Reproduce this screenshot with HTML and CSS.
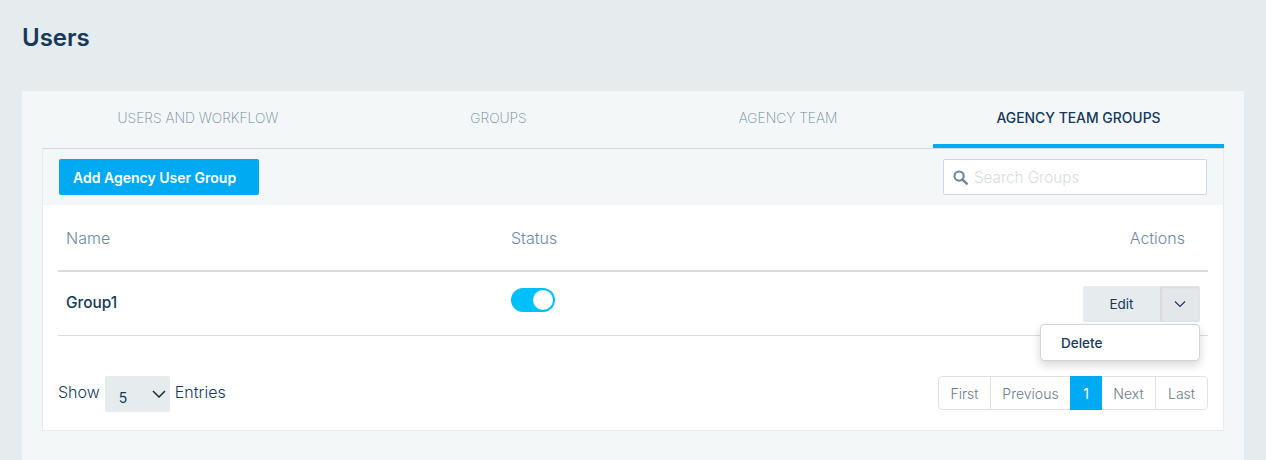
FILE: index.html
```html
<!DOCTYPE html>
<html lang="en">
<head>
<meta charset="utf-8">
<title>Users</title>
<link rel="stylesheet" href="styles.css">
</head>
<body>
<h1 class="page-title">Users</h1>
<main class="card">
  <nav class="tabs">
    <a class="tab">USERS AND WORKFLOW</a>
    <a class="tab">GROUPS</a>
    <a class="tab">AGENCY TEAM</a>
    <a class="tab tab-active">AGENCY TEAM GROUPS</a>
  </nav>
  <section class="panel">
    <div class="toolbar">
      <button class="btn-primary">Add Agency User Group</button>
      <label class="search">
        <svg class="search-icon" viewBox="0 0 16 16" width="15" height="15"><circle cx="6.5" cy="6.5" r="4.9" fill="none" stroke="#6f8599" stroke-width="2.2"/><path d="M10.2 10.2 14.6 14.6" stroke="#6f8599" stroke-width="2.6" stroke-linecap="round"/></svg>
        <span class="search-placeholder">Search Groups</span>
      </label>
    </div>
    <div class="content">
      <div class="row row-head">
        <div class="col-name">Name</div>
        <div class="col-status">Status</div>
        <div class="col-actions">Actions</div>
      </div>
      <div class="row row-body">
        <div class="col-name group-name">Group1</div>
        <div class="col-status"><span class="toggle"><span class="knob"></span></span></div>
        <div class="col-actions">
          <div class="action-group">
            <button class="btn-edit">Edit</button>
            <button class="btn-caret">
              <svg viewBox="0 0 12 8" width="12" height="8"><path d="M1 1.5 6 6.5 11 1.5" fill="none" stroke="#1d3a5a" stroke-width="1.2"/></svg>
            </button>
            <div class="menu"><span class="menu-item">Delete</span></div>
          </div>
        </div>
      </div>
      <div class="footer">
        <div class="entries">
          <span>Show</span>
          <span class="select"><span class="select-value">5</span>
            <svg viewBox="0 0 14 8" width="14" height="8"><path d="M1 1 7 7 13 1" fill="none" stroke="#1b2a38" stroke-width="1.5"/></svg>
          </span>
          <span>Entries</span>
        </div>
        <div class="pager">
          <span class="page page-first">First</span>
          <span class="page page-prev">Previous</span>
          <span class="page page-num">1</span>
          <span class="page page-next">Next</span>
          <span class="page page-last">Last</span>
        </div>
      </div>
    </div>
  </section>
</main>
</body>
</html>
```
FILE: styles.css
```css
* { box-sizing: border-box; }
html, body { height: 100%; }
body {
  margin: 0;
  height: 460px;
  overflow: hidden;
  background: #e6ebee;
  font-family: Inter, "Liberation Sans", sans-serif;
  color: #15395b;
  padding: 0 22px;
}
.page-title {
  margin: 0;
  padding-top: 23px;
  height: 91px;
  font-size: 24px;
  line-height: 29px;
  font-weight: 600;
  color: #15395b;
}
.card {
  background: #f4f7f8;
  padding: 0 20px;
  height: 369px;
}
.tabs {
  display: grid;
  grid-template-columns: 312px 289px 290px 291px;
  height: 57px;
}
.tab {
  display: flex;
  align-items: center;
  justify-content: center;
  padding-bottom: 4px;
  font-size: 13.8px;
  font-weight: 200;
  color: #6e8799;
}
.tab-active {
  font-weight: 500;
  font-size: 13.9px;
  color: #15395b;
  border-bottom: 4px solid #00aaf2;
  padding-bottom: 0;
}
.panel {
  border: 1px solid #e6ebee;
  border-top: 1px solid #d2d9e1;
  height: 283px;
  background: #fff;
}
.toolbar {
  height: 56px;
  background: #f4f7f8;
  display: flex;
  align-items: center;
  justify-content: space-between;
  padding: 0 16px;
}
.btn-primary {
  width: 200px;
  height: 36px;
  border: 0;
  border-radius: 2px;
  background: #00aaf2;
  color: #fff;
  font: 600 14px Inter, sans-serif;
  text-align: left;
  padding: 0 14px;
}
.search {
  width: 264px;
  height: 36px;
  background: #fff;
  border: 1px solid #ced6de;
  border-radius: 2px;
  display: flex;
  align-items: center;
  padding-left: 9px;
  gap: 6px;
}
.search-placeholder {
  font-size: 15.2px;
  font-weight: 300;
  color: #d5dde5;
}
.content { padding: 0 15px; }
.row {
  display: flex;
  align-items: center;
  padding: 0 8px;
}
.row-head {
  height: 67px;
  border-bottom: 2px solid #dcdcdc;
  font-size: 16px;
  font-weight: 300;
  color: #6e8aa3;
}
.row-body {
  height: 64px;
  border-bottom: 1px solid #dcdcdc;
}
.col-name { width: 445px; }
.col-status { flex: 1; }
.col-actions { text-align: right; padding-right: 15px; }
.row-body .col-actions { padding-right: 0; }
.group-name {
  font-size: 15.4px;
  font-weight: 500;
  color: #15395b;
  padding-bottom: 2px;
}
.toggle {
  display: block;
  width: 44px;
  height: 24px;
  margin-top: -7px;
  border-radius: 12px;
  background: #00c0fb;
  position: relative;
}
.knob {
  position: absolute;
  top: 2px;
  right: 2px;
  width: 20px;
  height: 20px;
  border-radius: 50%;
  background: #fff;
}
.action-group {
  position: relative;
  display: flex;
  height: 36px;
  margin-top: 1px;
}
.btn-edit {
  flex: none;
  width: 77px;
  border: 0;
  background: #e6ebee;
  border-radius: 2px 0 0 2px;
  font: 400 13.5px Inter, sans-serif;
  color: #15395b;
}
.btn-caret {
  flex: none;
  width: 40px;
  border: 1px solid #dfe4e8;
  border-left: 1px solid #d6dbdf;
  background: #e3e7ea;
  box-shadow: inset 1px 1px 2px rgba(0, 0, 0, .06);
  display: flex;
  align-items: center;
  justify-content: center;
  padding: 0;
  border-radius: 0 2px 2px 0;
}
.menu {
  position: absolute;
  top: 38px;
  right: 0;
  width: 160px;
  height: 37px;
  background: #fff;
  border: 1px solid #d4d4d4;
  border-radius: 4px;
  box-shadow: 0 4px 10px rgba(0, 0, 0, .16);
  text-align: left;
  padding-left: 20px;
  display: flex;
  align-items: center;
  z-index: 2;
}
.menu-item {
  font-size: 13.5px;
  font-weight: 500;
  color: #15395b;
}
.footer {
  display: flex;
  justify-content: space-between;
  align-items: flex-start;
  padding-top: 40px;
}
.entries {
  display: flex;
  align-items: center;
  gap: 5px;
  font-size: 16px;
  font-weight: 300;
  color: #15395b;
  height: 32px;
}
.select {
  flex: none;
  width: 65px;
  height: 36px;
  margin-top: 4px;
  background: #e6ebee;
  border-radius: 2px;
  display: flex;
  align-items: center;
  justify-content: space-between;
  padding: 0 4px 0 14px;
  font-size: 14px;
  font-weight: 400;
  color: #15395b;
}
.select-value { padding-top: 7px; }
.pager {
  display: flex;
  height: 34px;
  background: #fff;
  border: 1px solid #dee2e6;
  border-radius: 4px;
  font-size: 14px;
  font-weight: 300;
  color: #6b7a88;
}
.page {
  display: flex;
  align-items: center;
  justify-content: center;
}
.page-first { width: 52px; border-right: 1px solid #dee2e6; }
.page-prev { width: 79px; }
.page-num {
  width: 32px;
  margin: -1px 0;
  background: #00aaf2;
  color: #fff;
  font-weight: 400;
}
.page-next { width: 54px; border-right: 1px solid #dee2e6; }
.page-last { width: 51px; }
```
